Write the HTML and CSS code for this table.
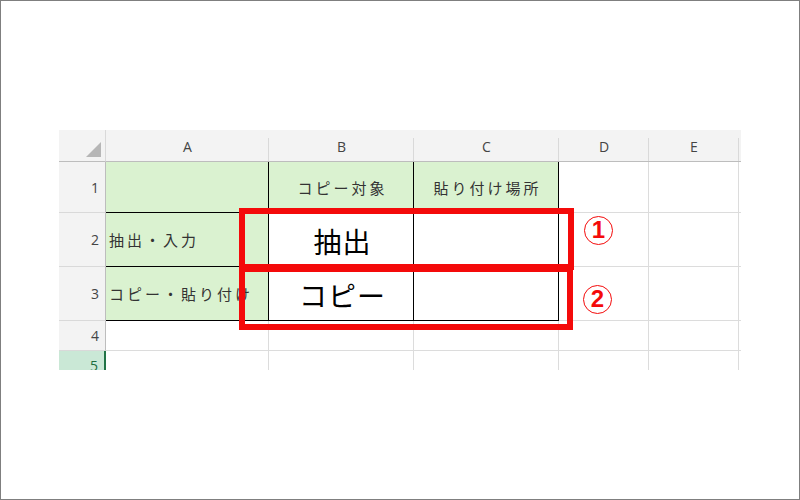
FILE: index.html
```html
<!DOCTYPE html>
<html lang="ja">
<head>
<meta charset="utf-8">
<link rel="stylesheet" href="styles.css">
</head>
<body>
<div class="frame">
  <div class="sheet">
    <div class="hd corner"><span class="tri"></span></div>
    <div class="hd col">A</div>
    <div class="hd col">B</div>
    <div class="hd col">C</div>
    <div class="hd col">D</div>
    <div class="hd col">E</div>
    <div class="hd col end"></div>

    <div class="hd row">1</div>
    <div class="c green blk"></div>
    <div class="c green blk center">コピー対象</div>
    <div class="c green blk center">貼り付け場所</div>
    <div class="c"></div>
    <div class="c"></div>
    <div class="c end"></div>

    <div class="hd row">2</div>
    <div class="c green blk left">抽出・入力</div>
    <div class="c blk center big">抽出</div>
    <div class="c blk"></div>
    <div class="c"></div>
    <div class="c"></div>
    <div class="c end"></div>

    <div class="hd row">3</div>
    <div class="c green blk left">コピー・貼り付け</div>
    <div class="c blk center big">コピー</div>
    <div class="c blk"></div>
    <div class="c"></div>
    <div class="c"></div>
    <div class="c end"></div>

    <div class="hd row">4</div>
    <div class="c"></div>
    <div class="c"></div>
    <div class="c"></div>
    <div class="c"></div>
    <div class="c"></div>
    <div class="c end"></div>

    <div class="hd row sel">5</div>
    <div class="c"></div>
    <div class="c"></div>
    <div class="c"></div>
    <div class="c"></div>
    <div class="c"></div>
    <div class="c end"></div>
  </div>

  <div class="box box1"></div>
  <div class="box box2"></div>
  <div class="num num1">1</div>
  <div class="num num2">2</div>
</div>
</body>
</html>
```
FILE: styles.css
```css
* { box-sizing: border-box; }
html, body { margin: 0; padding: 0; background: #fff; }
.frame {
  position: relative;
  width: 800px;
  height: 500px;
  border: 1px solid #7f7f7f;
  background: #fff;
  padding: 129px 0 0 58px;
}
.sheet {
  display: grid;
  grid-template-columns: 47px 163px 145px 145px 90px 90px 2px;
  grid-template-rows: 32px 51px 54px 54px 30px 30px;
  width: 682px;
  height: 240px;
  overflow: hidden;
  font-family: "Noto Sans CJK JP", sans-serif;
}
.hd {
  background: #f3f3f3;
  color: #444;
  font-family: "Open Sans", "Liberation Sans", sans-serif;
  font-size: 14px;
  position: relative;
}
.col {
  display: flex;
  align-items: center;
  justify-content: center;
  border-bottom: 1px solid #bdbdbd;
  padding-top: 1px;
}
.col::after {
  content: "";
  position: absolute;
  right: 0;
  top: 8px;
  bottom: 0;
  width: 1px;
  background: #d9d9d9;
}
.col.end::after { display: none; }
.corner {
  border-bottom: 1px solid #bdbdbd;
  border-right: 1px solid #d9d9d9;
}
.tri {
  position: absolute;
  right: 4px;
  bottom: 4px;
  width: 0;
  height: 0;
  border-left: 15px solid transparent;
  border-bottom: 15px solid #b6b6b6;
}
.row {
  display: flex;
  align-items: center;
  justify-content: flex-end;
  padding-right: 6px;
  border-right: 1px solid #bdbdbd;
  border-bottom: 1px solid #d9d9d9;
}
.row.sel {
  background: #cae8d6;
  border-right: 2px solid #217346;
  color: #1d6e3f;
}
.c {
  border-right: 1px solid #dcdcdc;
  border-bottom: 1px solid #dcdcdc;
  display: flex;
  align-items: center;
  font-size: 15px;
  letter-spacing: 3px;
  color: #333;
  white-space: nowrap;
  overflow: visible;
}
.c.end { border-right: none; }
.green { background: #daf2d0; }
.blk { border-right-color: #000; border-bottom-color: #000; }
.center { justify-content: center; padding-left: 3px; }
.left { padding-left: 3px; }
.big {
  font-size: 28px;
  letter-spacing: 1px;
  color: #000;
  padding-top: 2px;
}
.box {
  position: absolute;
  border: 6px solid #f40a0a;
  left: 238px;
}
.box1 { top: 207px; width: 335px; height: 62px; }
.box2 { top: 265px; width: 334px; height: 64px; }
.num {
  position: absolute;
  width: 29px;
  height: 29px;
  border: 1.4px solid #f40a0a;
  border-radius: 50%;
  color: #f40a0a;
  font-family: "Liberation Sans", "Noto Sans", sans-serif;
  font-weight: bold;
  font-size: 24px;
  line-height: 26px;
  text-align: center;
}
.num1 { left: 583px; top: 215px; }
.num2 { left: 582px; top: 284px; }
```
